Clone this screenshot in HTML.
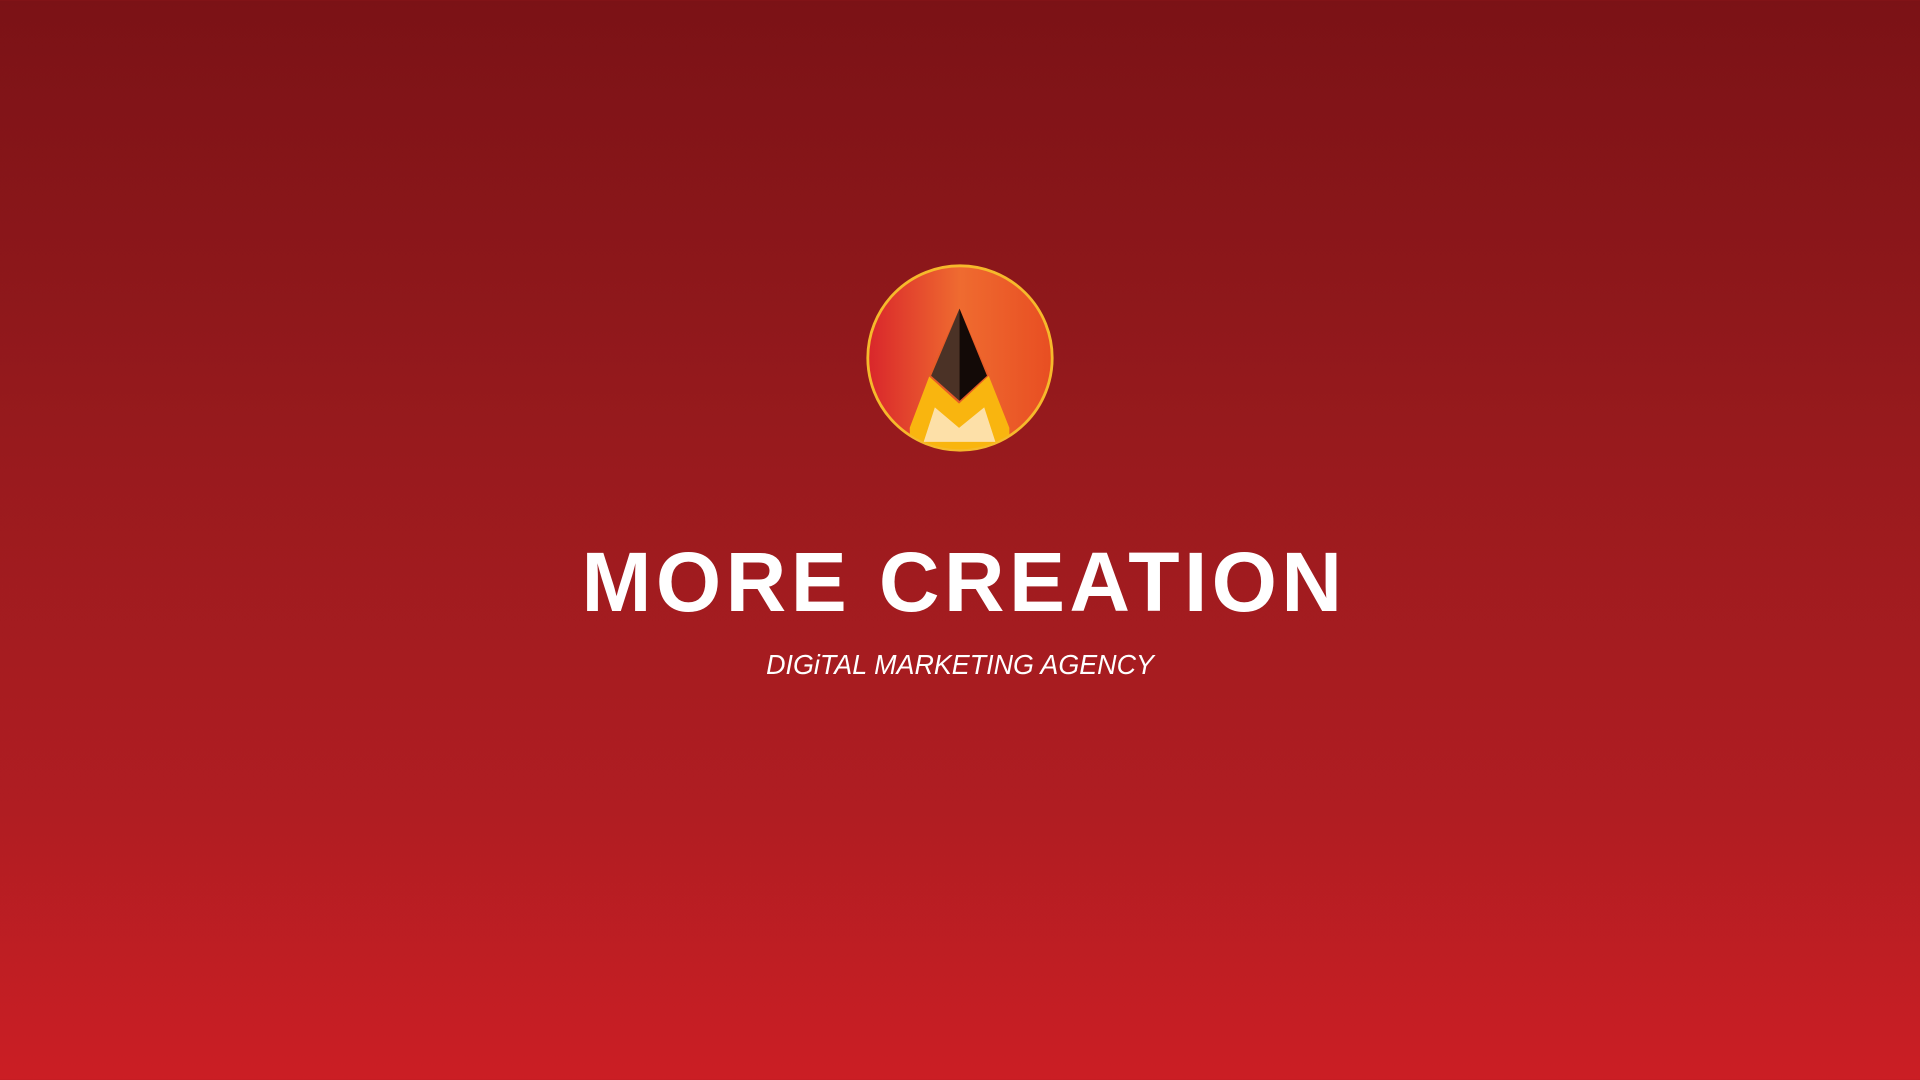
<!DOCTYPE html>
<html><head><meta charset="utf-8"><style>
html,body{margin:0;padding:0}
body{width:1920px;height:1080px;overflow:hidden;background:linear-gradient(to bottom,#7b1216 0%,#971a1d 40%,#b01d22 75%,#cb1e24 100%);position:relative;font-family:"Liberation Sans",sans-serif}
svg.logo{position:absolute;left:865px;top:263px;width:190px;height:190px}
.t{position:absolute;left:0;width:1920px;text-align:center;color:#fff}
.t1{top:537px;font-size:84px;font-weight:bold;letter-spacing:4.4px;line-height:90px;padding-left:4px}
.t2{top:648px;font-size:28px;font-style:italic;line-height:34px;transform:scaleX(0.96)}
</style></head><body>
<svg class="logo" viewBox="-2 -2 204 204">
<defs>
<linearGradient id="g" x1="0" x2="1" y1="0" y2="0">
<stop offset="0" stop-color="#d9262b"/><stop offset="0.5" stop-color="#ef6b30"/><stop offset="1" stop-color="#e84e22"/>
</linearGradient>
<clipPath id="c"><circle cx="100" cy="100" r="98"/></clipPath>
</defs>
<circle cx="100" cy="100" r="99" fill="url(#g)" stroke="#f6b92b" stroke-width="3"/>
<g clip-path="url(#c)">
<polygon points="68,117 46,175 47,205 153,205 153,175 130,117 99,146" fill="#f9b50f"/>
<polygon points="73,153 61,190 138,190 126,153 99,175" fill="#fde0a8"/>
<polygon points="99.5,47 66,119 99,149 131,119" fill="#e55a26"/>
<polygon points="99.5,47 69,119 99.5,146" fill="#4b3226"/>
<polygon points="99.5,47 129,119 99.5,146" fill="#130a07"/>
</g>
</svg>
<div class="t t1">MORE CREATION</div>
<div class="t t2">DIGiTAL MARKETING AGENCY</div>
</body></html>
